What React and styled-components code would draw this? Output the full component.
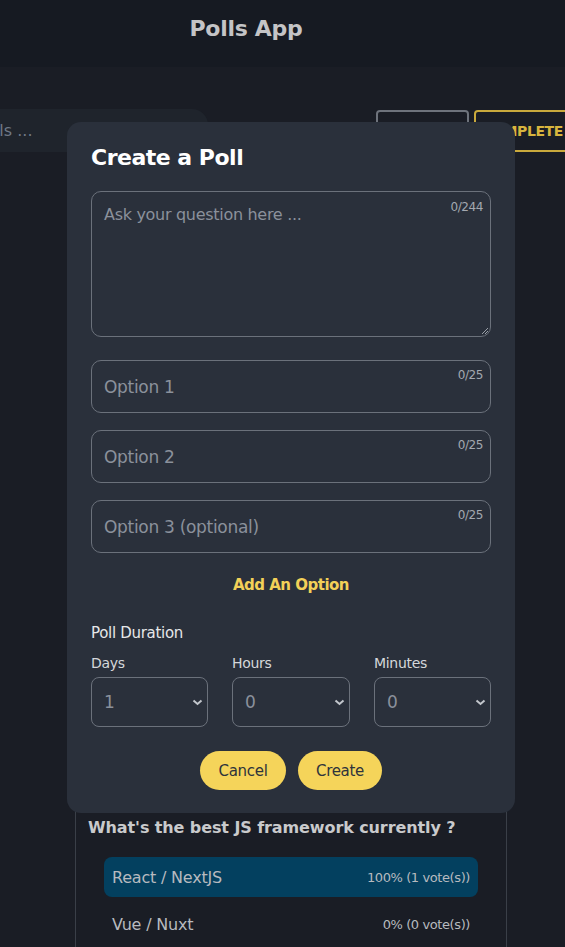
import React from "react";
import styled, { createGlobalStyle } from "styled-components";

const GlobalStyle = createGlobalStyle`
  html, body {
    margin: 0;
    padding: 0;
    background: #1a1d25;
    font-family: "DejaVu Sans", "Noto Sans", sans-serif;
    overflow: hidden;
  }
  * { box-sizing: border-box; }
`;

const Page = styled.div`
  position: relative;
  width: 565px;
  height: 947px;
  overflow: hidden;
  background: #1a1d25;
`;

const Header = styled.header`
  height: 67px;
  background: #161a22;
  display: flex;
  justify-content: center;
  align-items: center;
  padding: 0 73px 10px 0;
`;

const Title = styled.h1`
  margin: 0;
  font-size: 22px;
  font-weight: 600;
  color: #c4c4c6;
  letter-spacing: -0.3px;
`;

const Toolbar = styled.div`
  display: flex;
  justify-content: center;
  margin-top: 41px;
`;

const ToolbarInner = styled.div`
  flex: 0 0 800px;
  display: flex;
  align-items: center;
  gap: 5px;
`;

const Search = styled.div`
  width: 325px;
  height: 43px;
  border-radius: 16px;
  background: #1f242c;
  color: #6f7886;
  font-size: 16px;
  display: flex;
  align-items: center;
  justify-content: flex-end;
  margin-right: 163px;
  span { margin-right: 175px; white-space: nowrap; }
`;

const FilterButton = styled.button`
  height: 42px;
  width: ${(p) => p.$w}px;
  background: transparent;
  border: 2px solid ${(p) => (p.$active ? "#c9a93c" : "#6e737c")};
  border-radius: 4px;
  color: ${(p) => (p.$active ? "#d8b53e" : "#9aa0a8")};
  font-family: inherit;
  font-size: 14px;
  font-weight: 600;
  letter-spacing: -0.4px;
  margin-top: 2px;
  padding: ${(p) => (p.$active ? "0 32px 0 0" : "0")};
`;

const PollCard = styled.section`
  width: 432px;
  margin: 0 0 0 75px;
  border-left: 1px solid #3a3f48;
  border-right: 1px solid #3a3f48;
  padding: 666px 28px 0 12px;
  height: 1000px;
`;

const Question = styled.h3`
  margin: 0 0 20px;
  font-size: 16px;
  font-weight: 600;
  color: #c9cacc;
  letter-spacing: -0.1px;
`;

const OptionRow = styled.div`
  margin-left: 16px;
  height: 40px;
  border-radius: 8px;
  background: ${(p) => (p.$filled ? "#03405f" : "transparent")};
  display: flex;
  justify-content: space-between;
  align-items: center;
  padding: 0 8px;
  margin-bottom: 7px;
  color: #b7babf;
`;

const OptionName = styled.span`
  font-size: 16px;
  letter-spacing: -0.2px;
`;

const OptionStat = styled.span`
  font-size: 13px;
  letter-spacing: -0.4px;
`;

const Modal = styled.div`
  position: absolute;
  left: 67px;
  top: 122px;
  width: 448px;
  height: 691px;
  background: #2a303b;
  border-radius: 14px;
  padding: 22px 24px 0;
  display: flex;
  flex-direction: column;
`;

const ModalTitle = styled.h2`
  margin: 0 0 19px;
  font-size: 22px;
  font-weight: 600;
  color: #ffffff;
  letter-spacing: -0.5px;
  line-height: 28px;
`;

const Field = styled.div`
  position: relative;
  flex: none;
  height: ${(p) => p.$h}px;
  border: 1px solid #6b717b;
  border-radius: 10px;
  margin-bottom: ${(p) => p.$mb}px;
  padding: ${(p) => (p.$area ? "13px 12px" : "0 12px")};
  display: flex;
  align-items: ${(p) => (p.$area ? "flex-start" : "center")};
  color: #8b919b;
  font-size: ${(p) => (p.$area ? 16 : 17)}px;
  letter-spacing: -0.3px;
`;

const Counter = styled.span`
  position: absolute;
  top: ${(p) => (p.$area ? 8 : 7)}px;
  right: 7px;
  font-size: 12px;
  color: #a3a8b0;
  letter-spacing: -0.4px;
`;

const Resize = styled.svg`
  position: absolute;
  right: 1px;
  bottom: 1px;
`;

const AddOption = styled.div`
  text-align: center;
  color: #f3d158;
  font-size: 15px;
  font-weight: 700;
  letter-spacing: -0.5px;
  margin-top: 23px;
`;

const SectionLabel = styled.div`
  margin-top: 30px;
  color: #e6e7e9;
  font-size: 15px;
  letter-spacing: -0.3px;
`;

const DurationGrid = styled.div`
  display: grid;
  grid-template-columns: 117px 118px 117px;
  justify-content: space-between;
  margin-top: 13px;
`;

const DurationCol = styled.div`
  display: flex;
  flex-direction: column;
`;

const SmallLabel = styled.div`
  color: #d5d7da;
  font-size: 14px;
  letter-spacing: -0.3px;
  margin-bottom: 6px;
`;

const SelectBox = styled.div`
  height: 50px;
  border: 1px solid #6b717b;
  border-radius: 8px;
  display: flex;
  align-items: center;
  justify-content: space-between;
  padding: 0 4px 0 12px;
  color: #8b919b;
  font-size: 17px;
`;

const Actions = styled.div`
  display: flex;
  justify-content: center;
  gap: 12px;
  margin-top: 24px;
`;

const YellowButton = styled.button`
  height: 39px;
  width: ${(p) => p.$w}px;
  border: none;
  border-radius: 20px;
  background: #f5d45a;
  color: #2e333c;
  font-family: inherit;
  font-size: 15px;
  letter-spacing: -0.3px;
`;

const Chevron = () => (
  <svg width="11" height="7" viewBox="0 0 11 7">
    <path d="M1.5 1.5 L5.5 5 L9.5 1.5" stroke="#c2c6cc" strokeWidth="2" fill="none" />
  </svg>
);

export default function App() {
  return (
    <>
      <GlobalStyle />
      <Page>
        <Header>
          <Title>Polls App</Title>
        </Header>
        <Toolbar>
          <ToolbarInner>
            <Search>
              <span>Search polls ...</span>
            </Search>
            <FilterButton $w={93}>ALL</FilterButton>
            <FilterButton $w={130} $active>
              COMPLETE
            </FilterButton>
          </ToolbarInner>
        </Toolbar>
        <PollCard>
          <Question>What's the best JS framework currently ?</Question>
          <OptionRow $filled>
            <OptionName>React / NextJS</OptionName>
            <OptionStat>100% (1 vote(s))</OptionStat>
          </OptionRow>
          <OptionRow>
            <OptionName>Vue / Nuxt</OptionName>
            <OptionStat>0% (0 vote(s))</OptionStat>
          </OptionRow>
        </PollCard>
        <Modal>
          <ModalTitle>Create a Poll</ModalTitle>
          <Field $area $h={146} $mb={23}>
            Ask your question here ...
            <Counter $area>0/244</Counter>
            <Resize width="9" height="9" viewBox="0 0 9 9">
              <path d="M8 2 L2 8 M8 5 L5 8" stroke="#9aa0a8" strokeWidth="1" />
            </Resize>
          </Field>
          <Field $h={53} $mb={17}>
            Option 1<Counter>0/25</Counter>
          </Field>
          <Field $h={53} $mb={17}>
            Option 2<Counter>0/25</Counter>
          </Field>
          <Field $h={53} $mb={0}>
            Option 3 (optional)<Counter>0/25</Counter>
          </Field>
          <AddOption>Add An Option</AddOption>
          <SectionLabel>Poll Duration</SectionLabel>
          <DurationGrid>
            {[
              ["Days", "1"],
              ["Hours", "0"],
              ["Minutes", "0"],
            ].map(([label, value]) => (
              <DurationCol key={label}>
                <SmallLabel>{label}</SmallLabel>
                <SelectBox>
                  {value}
                  <Chevron />
                </SelectBox>
              </DurationCol>
            ))}
          </DurationGrid>
          <Actions>
            <YellowButton $w={86}>Cancel</YellowButton>
            <YellowButton $w={84}>Create</YellowButton>
          </Actions>
        </Modal>
      </Page>
    </>
  );
}
